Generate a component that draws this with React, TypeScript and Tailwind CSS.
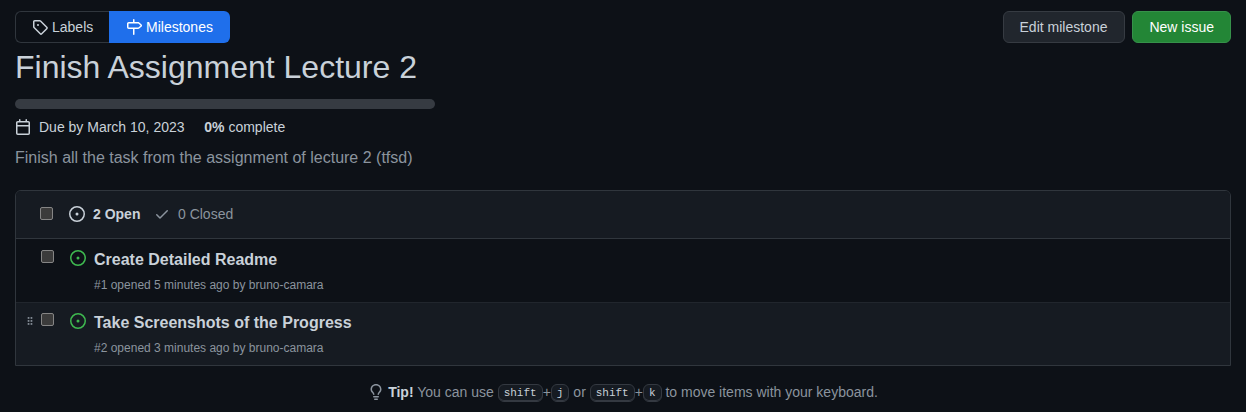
import type { ReactNode } from "react";

const icons = {
  tag: "M1 7.775V2.75C1 1.784 1.784 1 2.75 1h5.025c.464 0 .91.184 1.238.513l6.25 6.25a1.75 1.75 0 0 1 0 2.474l-5.026 5.026a1.75 1.75 0 0 1-2.474 0l-6.25-6.25A1.752 1.752 0 0 1 1 7.775Zm1.5 0c0 .066.026.13.073.177l6.25 6.25a.25.25 0 0 0 .354 0l5.025-5.025a.25.25 0 0 0 0-.354l-6.25-6.25a.25.25 0 0 0-.177-.073H2.75a.25.25 0 0 0-.25.25ZM6 5a1 1 0 1 1 0 2 1 1 0 0 1 0-2Z",
  milestone: "M7.75 0a.75.75 0 0 1 .75.75V3h3.634c.414 0 .814.147 1.13.414l2.07 1.75a1.75 1.75 0 0 1 0 2.672l-2.07 1.75a1.75 1.75 0 0 1-1.13.414H8.5v5.25a.75.75 0 0 1-1.5 0V10H2.75A1.75 1.75 0 0 1 1 8.25v-3.5C1 3.784 1.784 3 2.75 3H7V.75A.75.75 0 0 1 7.75 0Zm4.384 8.5a.25.25 0 0 0 .161-.06l2.07-1.75a.248.248 0 0 0 0-.38l-2.07-1.75a.25.25 0 0 0-.161-.06H2.75a.25.25 0 0 0-.25.25v3.5c0 .138.112.25.25.25h9.384Z",
  calendar: "M4.75 0a.75.75 0 0 1 .75.75V2h5V.75a.75.75 0 0 1 1.5 0V2h1.25c.966 0 1.75.784 1.75 1.75v10.5A1.75 1.75 0 0 1 13.25 16H2.75A1.75 1.75 0 0 1 1 14.25V3.75C1 2.784 1.784 2 2.75 2H4V.75A.75.75 0 0 1 4.75 0ZM2.5 7.5v6.75c0 .138.112.25.25.25h10.5a.25.25 0 0 0 .25-.25V7.5Zm10.75-4H2.75a.25.25 0 0 0-.25.25V6h11V3.75a.25.25 0 0 0-.25-.25Z",
  issue: "M8 9.5a1.5 1.5 0 1 0 0-3 1.5 1.5 0 0 0 0 3ZM8 0a8 8 0 1 1 0 16A8 8 0 0 1 8 0ZM1.5 8a6.5 6.5 0 1 0 13 0 6.5 6.5 0 0 0-13 0Z",
  check: "M13.78 4.22a.75.75 0 0 1 0 1.06l-7.25 7.25a.75.75 0 0 1-1.06 0L2.22 9.28a.751.751 0 0 1 .018-1.042.751.751 0 0 1 1.042-.018L6 10.94l6.72-6.72a.75.75 0 0 1 1.06 0Z",
  bulb: "M8 1.5c-2.363 0-4 1.69-4 3.75 0 .984.424 1.625.984 2.304l.214.253c.223.264.47.556.673.848.284.411.537.896.621 1.49a.75.75 0 0 1-1.484.211c-.04-.282-.163-.547-.37-.847a8.456 8.456 0 0 0-.542-.68c-.084-.1-.173-.205-.268-.32C3.201 7.75 2.5 6.766 2.5 5.25 2.5 2.31 4.863 0 8 0s5.5 2.31 5.5 5.25c0 1.516-.701 2.5-1.328 3.259-.095.115-.184.22-.268.319-.207.245-.383.453-.541.681-.208.3-.33.565-.37.847a.751.751 0 0 1-1.485-.212c.084-.593.337-1.078.621-1.489.203-.292.45-.584.673-.848.075-.088.147-.173.213-.253.561-.679.985-1.32.985-2.304 0-2.06-1.637-3.75-4-3.75ZM5.75 12h4.5a.75.75 0 0 1 0 1.5h-4.5a.75.75 0 0 1 0-1.5ZM6 15.25a.75.75 0 0 1 .75-.75h2.5a.75.75 0 0 1 0 1.5h-2.5a.75.75 0 0 1-.75-.75Z",
};

function Icon({ name, className = "" }: { name: keyof typeof icons; className?: string }) {
  return (
    <svg viewBox="0 0 16 16" className={`size-4 shrink-0 fill-current ${className}`} aria-hidden="true">
      <path fillRule="evenodd" d={icons[name]} />
    </svg>
  );
}

function Checkbox({ className = "" }: { className?: string }) {
  return (
    <span
      role="checkbox"
      aria-checked="false"
      className={`size-[13px] shrink-0 rounded-[2px] border border-[#858585] bg-[#3b3b3b] ${className}`}
    />
  );
}

function DragHandle() {
  return (
    <svg viewBox="0 0 6 8" className="mt-3.5 h-2 w-1.5 fill-[#8b949e]" aria-hidden="true">
      {[0, 3, 6].map((y) => (
        <g key={y}>
          <rect x="0.7" y={y + 0.1} width="1.7" height="1.7" />
          <rect x="3.6" y={y + 0.1} width="1.7" height="1.7" />
        </g>
      ))}
    </svg>
  );
}

function Kbd({ children }: { children: ReactNode }) {
  return (
    <kbd className="inline-block rounded-md border border-[#343941] bg-[#161b22] px-[5px] py-[3px] align-middle font-['Liberation_Mono',monospace] text-[11px] leading-[10px] text-[#c9d1d9] shadow-[inset_0_-1px_0_#343941]">
      {children}
    </kbd>
  );
}

function IssueRow({ title, meta, active = false }: { title: string; meta: string; active?: boolean }) {
  return (
    <li className={`flex h-[63px] ${active ? "border-t border-[#21262d] bg-[#161b22]" : ""}`}>
      <div className="w-[25px] shrink-0 pl-[11px]">{active && <DragHandle />}</div>
      <Checkbox className={active ? "mt-2.5" : "mt-[11px]"} />
      <Icon name="issue" className={`ml-4 text-[#3fb950] ${active ? "mt-2.5" : "mt-[11px]"}`} />
      <div className={`ml-2 ${active ? "pt-2" : "pt-[9px]"}`}>
        <a className="block text-base leading-6 font-bold text-[#c9d1d9]">{title}</a>
        <div className="mt-1 text-xs leading-[18px] text-[#8b949e]">{meta}</div>
      </div>
    </li>
  );
}

export default function App() {
  return (
    <main className="flex h-[412px] flex-col overflow-hidden bg-[#0d1117] px-[15px] pt-[11px] font-['Liberation_Sans',Arial,sans-serif] text-sm text-[#c9d1d9]">
      <header className="flex h-8 justify-between">
        <nav className="flex">
          <a className="flex w-[94px] items-center gap-1 rounded-l-md border border-r-0 border-[#30363d] pl-4">
            <Icon name="tag" />
            Labels
          </a>
          <a className="flex w-[121px] items-center gap-1 rounded-r-md bg-[#1f6feb] pl-[17px] text-white">
            <Icon name="milestone" />
            Milestones
          </a>
        </nav>
        <div className="flex gap-[7px]">
          <button className="w-[122px] rounded-md border border-[#363b42] bg-[#21262d] pr-px">Edit milestone</button>
          <button className="w-[99px] rounded-md border border-[#36914a] bg-[#238636] pl-[0.5px] text-white">New issue</button>
        </div>
      </header>

      <h2 className="mt-1 h-10 text-[32px] leading-10">Finish Assignment Lecture 2</h2>
      <div className="mt-3 h-2.5 w-[420px] rounded-md bg-[#363b42]" />
      <div className="mt-2 flex h-5 items-center">
        <Icon name="calendar" />
        <span className="ml-2">Due by March 10, 2023</span>
        <span className="ml-[19.75px]">
          <b>0%</b> complete
        </span>
      </div>
      <p className="mt-[9px] text-base leading-6 text-[#8b949e]">Finish all the task from the assignment of lecture 2 (tfsd)</p>

      <section className="mt-5 h-44 rounded-t-md border border-[#30363d]">
        <div className="flex h-12 items-center rounded-t-[5px] border-b border-[#30363d] bg-[#161b22] pb-px pl-6">
          <Checkbox className="mb-px" />
          <Icon name="issue" className="ml-4" />
          <b className="ml-2">2 Open</b>
          <Icon name="check" className="ml-[13.5px] text-[#8b949e]" />
          <span className="ml-2 text-[#8b949e]">0 Closed</span>
        </div>
        <ul>
          <IssueRow title="Create Detailed Readme" meta="#1 opened 5 minutes ago by bruno-camara" />
          <IssueRow title="Take Screenshots of the Progress" meta="#2 opened 3 minutes ago by bruno-camara" active />
        </ul>
      </section>

      <footer className="mt-4 flex h-5 items-center justify-center text-[#8b949e]">
        <Icon name="bulb" className="mr-1" />
        <p className="leading-5 whitespace-nowrap">
          <b className="text-[#c9d1d9]">Tip!</b> You can use <Kbd>shift</Kbd>+<Kbd>j</Kbd> or <Kbd>shift</Kbd>+<Kbd>k</Kbd> to move
          items with your keyboard.
        </p>
      </footer>
    </main>
  );
}
